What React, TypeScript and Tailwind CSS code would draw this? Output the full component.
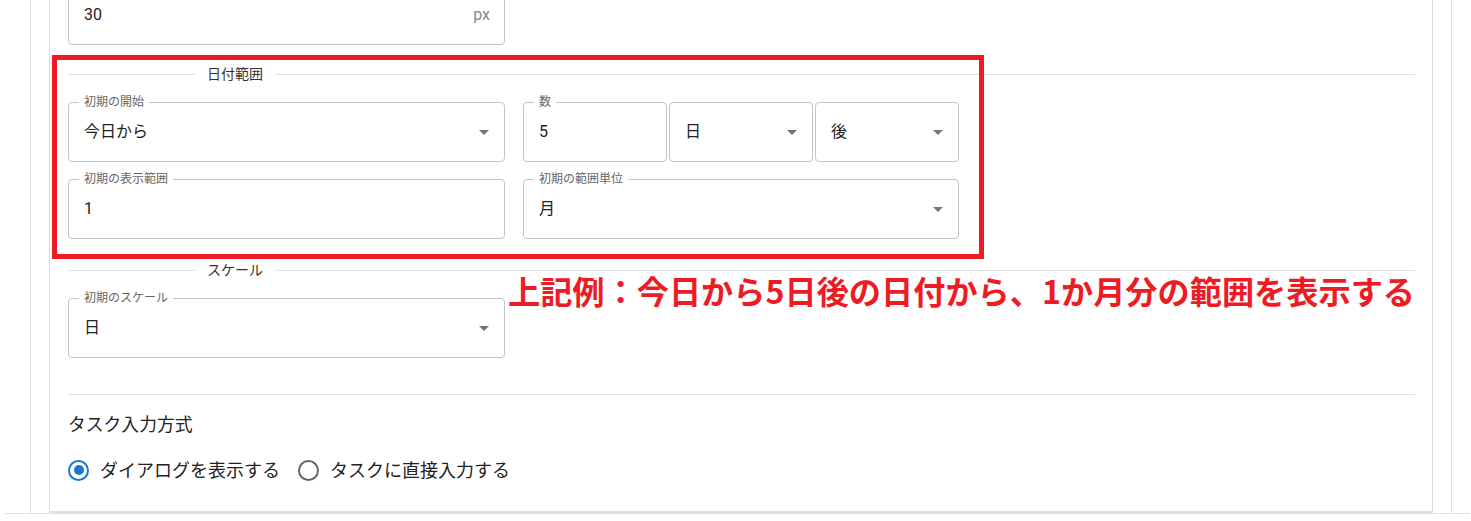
import type { ReactNode } from "react";

const FONT = "font-['Roboto','Noto_Sans_CJK_JP',sans-serif]";

function Outlined({ label, children }: { label?: string; children: ReactNode }) {
  return (
    <div className="relative h-[60px] rounded-[4px] border border-[#c4c4c4] bg-white">
      {label && (
        <span className="absolute -top-[9px] left-[10px] bg-white px-[5px] text-[12px] leading-[16px] text-[#666]">
          {label}
        </span>
      )}
      {children}
    </div>
  );
}

function DropArrow() {
  return (
    <svg viewBox="0 0 24 24" className="h-6 w-6 shrink-0 fill-[#757575]">
      <path d="M7 10l5 5 5-5z" />
    </svg>
  );
}

function SelectField({ label, value }: { label?: string; value: string }) {
  return (
    <Outlined label={label}>
      <div className="flex h-full items-center justify-between pl-[15px] pr-[8px]">
        <span className="text-[16px] text-[#222]">{value}</span>
        <DropArrow />
      </div>
    </Outlined>
  );
}

function TextField({ label, value, unit }: { label?: string; value: string; unit?: string }) {
  return (
    <Outlined label={label}>
      <div className="flex h-full items-center justify-between pl-[15px] pr-[14px]">
        <span className="text-[16px] text-[#222]">{value}</span>
        {unit && <span className="text-[16px] text-[#888]">{unit}</span>}
      </div>
    </Outlined>
  );
}

function SectionDivider({ title }: { title: string }) {
  return (
    <div className="flex h-5 items-center">
      <div className="h-px w-[127px] bg-[#e0e0e0]" />
      <span className="px-3 text-[14px] leading-5 text-[#333]">{title}</span>
      <div className="h-px flex-1 bg-[#e0e0e0]" />
    </div>
  );
}

function Radio({ checked, label }: { checked?: boolean; label: string }) {
  return (
    <label className="flex items-center">
      <span
        className={
          checked
            ? "flex h-[21px] w-[21px] items-center justify-center rounded-full border-[2px] border-[#1976d2]"
            : "flex h-[21px] w-[21px] items-center justify-center rounded-full border-[2px] border-[#666]"
        }
      >
        {checked && <span className="h-[10px] w-[10px] rounded-full bg-[#1976d2]" />}
      </span>
      <span className="ml-[11px] text-[18px] text-[#222]">{label}</span>
    </label>
  );
}

export default function App() {
  return (
    <div className={`relative h-[521px] overflow-hidden bg-white ${FONT}`}>
      <div className="ml-[4px] mr-[1px] border-b border-[#e0e0e0]">
        <div className="ml-[26px] mr-[18px] border-x border-[#dcdcdc] px-[18px]">
          <div className="flex flex-col border-x border-b-2 border-x-[#dcdcdc] border-b-[#e0e0e0] pb-[20px] pl-[18px] pr-[17px]">
            <div className="-mt-[15px] w-[437px]">
              <TextField value="30" unit="px" />
            </div>

            <div className="mt-[19px]">
              <SectionDivider title="日付範囲" />
            </div>

            <div className="mt-[18px] grid grid-cols-[437px_436px] gap-x-[18px] gap-y-[17px]">
              <SelectField label="初期の開始" value="今日から" />
              <div className="grid grid-cols-3 gap-[2px]">
                <TextField label="数" value="5" />
                <SelectField value="日" />
                <SelectField value="後" />
              </div>
              <TextField label="初期の表示範囲" value="1" />
              <SelectField label="初期の範囲単位" value="月" />
            </div>

            <div className="mt-[21px]">
              <SectionDivider title="スケール" />
            </div>

            <div className="mt-[18px] w-[437px]">
              <SelectField label="初期のスケール" value="日" />
            </div>

            <div className="mt-[36px] h-px bg-[#e0e0e0]" />

            <div className="mt-[18px] text-[17.8px] leading-6 text-[#222]">タスク入力方式</div>

            <div className="mt-[12px] flex h-[42px] items-center gap-[18px]">
              <Radio checked label="ダイアログを表示する" />
              <Radio label="タスクに直接入力する" />
            </div>
          </div>
        </div>
      </div>

      {/* annotation overlay */}
      <div className="pointer-events-none absolute left-[52px] top-[55px] h-[204px] w-[932px] border-[5px] border-[#ed1c24]" />
      <div className="pointer-events-none absolute left-[508px] top-[274px] whitespace-nowrap font-['Noto_Sans_CJK_JP',sans-serif] text-[32.2px] font-bold leading-[33px] text-[#ed1c24]">
        上記例：今日から5日後の日付から、1か月分の範囲を表示する
      </div>
    </div>
  );
}
